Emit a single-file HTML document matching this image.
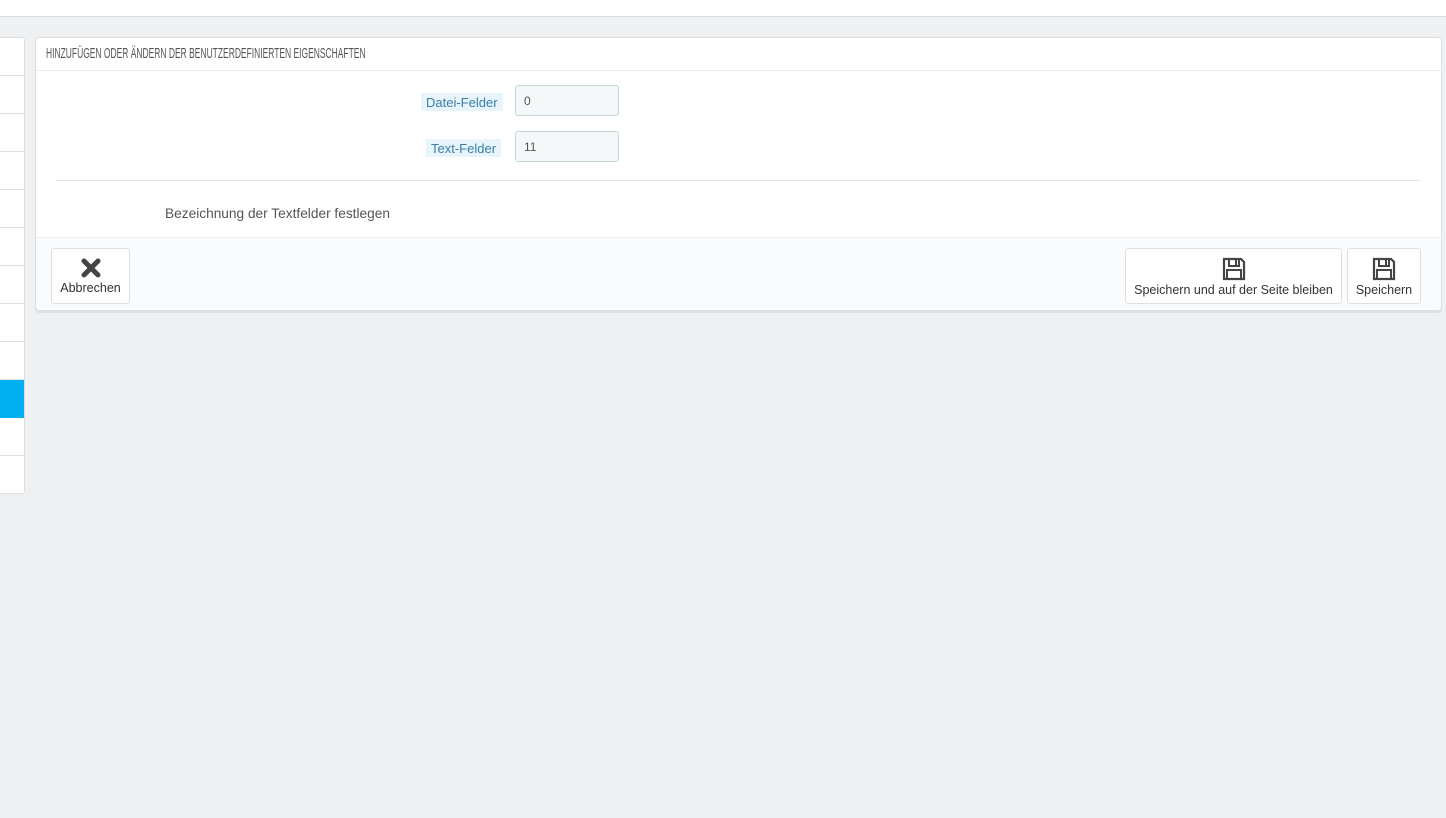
<!DOCTYPE html>
<html><head><meta charset="utf-8"><style>
*{box-sizing:border-box;margin:0;padding:0}
body{width:1446px;height:818px;background:#eff0f2;font-family:"Liberation Sans",sans-serif;color:#555;position:relative;overflow:hidden}
.top{position:absolute;left:0;top:0;width:1446px;height:17px;background:#fff;border-bottom:1px solid #d8dadd}
.side{position:absolute;left:0;top:37px;width:25px;height:457px;background:#fff;border:1px solid #dcdfe2;border-left:none;border-radius:0 3px 3px 0;overflow:hidden}
.side div{height:38px;border-bottom:1px solid #dcdfe2}
.side .act{background:#00aff0;border-color:#00aff0}
.panel{position:absolute;left:35px;top:37px;width:1407px;height:274px;background:#fff;border:1px solid #dcdfe2;border-radius:4px;box-shadow:0 2px 0 rgba(0,0,0,.06)}
.hd{position:absolute;left:10px;top:7px;font-size:15px;color:#555;transform:scaleX(0.565);transform-origin:0 0;white-space:nowrap}
.hdl{position:absolute;left:0;top:32px;width:1405px;height:1px;background:#eee}
.lbl{position:absolute;font-size:13px;color:#3a7fa8;background:#e8f4fb;padding:1px 5px;height:18px;line-height:17px}
.inp{position:absolute;left:479px;width:104px;height:31px;background:#f5f8f9;border:1px solid #c7d6db;border-radius:3px;font-size:12px;padding:8px;color:#555}
.sep{position:absolute;left:20px;top:142px;width:1365px;height:1px;background:#e5e5e5}
.txt{position:absolute;left:129px;top:168px;font-size:13.7px;color:#555}
.ft{position:absolute;left:0;top:199px;width:1405px;height:73px;background:#fafbfc;border-top:1px solid #eee;border-radius:0 0 4px 4px}
.btn{position:absolute;top:10px;height:56px;background:#fff;border:1px solid #dcdfe2;border-radius:3px;font-size:12.5px;color:#333;text-align:center;white-space:nowrap}
.btn svg{display:block;margin:8px auto 2px}
</style></head><body>
<div class="top"></div>
<div class="side"><div></div><div></div><div></div><div></div><div></div><div></div><div></div><div></div><div></div><div class="act"></div><div></div><div style="border:none"></div></div>
<div class="panel">
<div class="hd">HINZUFÜGEN ODER ÄNDERN DER BENUTZERDEFINIERTEN EIGENSCHAFTEN</div>
<div class="hdl"></div>
<div class="lbl" style="left:385px;top:55px">Datei-Felder</div>
<div class="inp" style="top:47px">0</div>
<div class="lbl" style="left:390px;top:101px">Text-Felder</div>
<div class="inp" style="top:93px">11</div>
<div class="sep"></div>
<div class="txt">Bezeichnung der Textfelder festlegen</div>
<div class="ft">
<div class="btn" style="left:15px;width:79px"><svg width="22" height="22" viewBox="0 0 22 22"><path d="M4 4L18 18M18 4L4 18" stroke="#444" stroke-width="5" stroke-linecap="round"/></svg>Abbrechen</div>
<div class="btn" style="left:1089px;width:217px"><svg width="24" height="24" viewBox="0 0 24 24"><path d="M2 2H19L22 5V22H2Z" fill="none" stroke="#444" stroke-width="2.2"/><rect x="7" y="2" width="10" height="7" fill="none" stroke="#444" stroke-width="2"/><rect x="13" y="3" width="2" height="5" fill="#444"/><rect x="5" y="13" width="14" height="9" fill="none" stroke="#444" stroke-width="2"/></svg>Speichern und auf der Seite bleiben</div>
<div class="btn" style="left:1311px;width:74px"><svg width="24" height="24" viewBox="0 0 24 24"><path d="M2 2H19L22 5V22H2Z" fill="none" stroke="#444" stroke-width="2.2"/><rect x="7" y="2" width="10" height="7" fill="none" stroke="#444" stroke-width="2"/><rect x="13" y="3" width="2" height="5" fill="#444"/><rect x="5" y="13" width="14" height="9" fill="none" stroke="#444" stroke-width="2"/></svg>Speichern</div>
</div>
</div>
</body></html>
